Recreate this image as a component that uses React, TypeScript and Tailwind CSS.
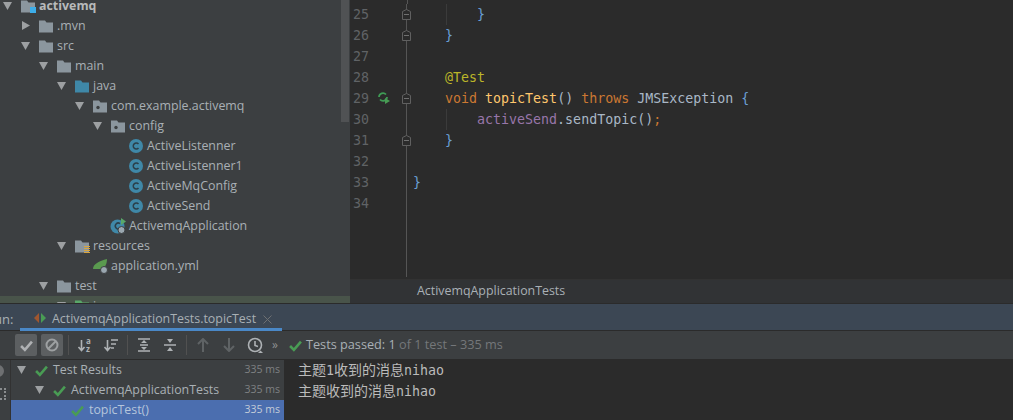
import { ReactNode } from "react";

const uiFont = "font-['Open_Sans','Noto_Sans',sans-serif]";
const monoFont = "font-['DejaVu_Sans_Mono','Noto_Sans_CJK_SC',monospace]";

function Arrow({ open = true }: { open?: boolean }) {
    return (
        <svg width="10" height="10" viewBox="0 0 10 10" className="shrink-0">
            {open ? <path d="M0 1h9L4.500 9z" fill="#9da0a2" /> : <path d="M1 0v9l8-4.500z" fill="#9da0a2" />}
        </svg>
    );
}

function Folder({ color = "#8b969e", dot, badge }: { color?: string; dot?: boolean; badge?: ReactNode }) {
    return (
        <svg width="16" height="14" viewBox="0 0 16 14" className="shrink-0">
            <path d="M0 1.500h6l1.500 2H14v10H0z" fill={color} />
            {dot && <circle cx="5" cy="8.500" r="1.700" fill="#3c3f41" />}
            {badge}
        </svg>
    );
}

function ClassIcon() {
    return (
        <svg width="16" height="16" viewBox="0 0 16 16" className="shrink-0 -ml-px">
            <circle cx="8" cy="8" r="7" fill="#3f88a8" />
            <path d="M10.500 6a3 3 0 1 0 0 4" fill="none" stroke="#2b3f4a" strokeWidth="1.500" />
        </svg>
    );
}

function Row({ depth, arrow, icon, bold, highlight, children }: { depth: number; arrow?: "open" | "closed"; icon: ReactNode; bold?: boolean; highlight?: boolean; children: ReactNode }) {
    return (
        <div className={`flex h-5 shrink-0 items-center ${highlight ? "bg-[#49544a]" : ""}`} style={{ paddingLeft: 3 + depth * 18 }}>
            <div className="flex w-[18px] shrink-0 items-center">{arrow && <Arrow open={arrow === "open"} />}</div>
            <div className="flex w-[18px] shrink-0 items-center">{icon}</div>
            <span className={bold ? "font-bold text-[#b8babb]" : ""}>{children}</span>
        </div>
    );
}

function ProjectTree() {
    return (
        <div className={`relative w-[350px] shrink-0 overflow-hidden bg-[#3c3f41] text-[12.4px] text-[#a9b0b5] ${uiFont}`}>
            <div className="-mt-1 flex flex-col">
                <Row depth={0} arrow="open" bold icon={<Folder badge={<rect x="9" y="8" width="6" height="6" fill="#3daee9" />} />}>activemq</Row>
                <Row depth={1} arrow="closed" icon={<Folder />}>.mvn</Row>
                <Row depth={1} arrow="open" icon={<Folder />}>src</Row>
                <Row depth={2} arrow="open" icon={<Folder />}>main</Row>
                <Row depth={3} arrow="open" icon={<Folder color="#3f88a8" />}>java</Row>
                <Row depth={4} arrow="open" icon={<Folder dot />}>com.example.activemq</Row>
                <Row depth={5} arrow="open" icon={<Folder dot />}>config</Row>
                <Row depth={6} icon={<ClassIcon />}>ActiveListenner</Row>
                <Row depth={6} icon={<ClassIcon />}>ActiveListenner1</Row>
                <Row depth={6} icon={<ClassIcon />}>ActiveMqConfig</Row>
                <Row depth={6} icon={<ClassIcon />}>ActiveSend</Row>
                <Row depth={5} icon={
                    <svg width="16" height="16" viewBox="0 0 16 16" className="-ml-px">
                        <circle cx="7.500" cy="8.500" r="7" fill="#3f88a8" />
                        <path d="M10 5.500a3 3 0 1 0 0 5" fill="none" stroke="#2b3f4a" strokeWidth="1.500" />
                        <path d="M11 0v7l5-3.500z" fill="#59a869" />
                        <circle cx="11.500" cy="12" r="3.500" fill="#9aa7b0" stroke="#3c3f41" />
                    </svg>
                }>ActivemqApplication</Row>
                <Row depth={3} arrow="open" icon={
                    <Folder badge={<path d="M9 7h6v1H9zM9 9h6v1H9zM9 11h6v1H9zM9 13h6v1H9z" fill="#d8a53f" />} />
                }>resources</Row>
                <Row depth={4} icon={
                    <svg width="16" height="16" viewBox="0 0 16 16">
                        <path d="M0 11C0 6 6 3 14 1c0 5-2 9-6 10z" fill="#5a9a4f" />
                        <circle cx="11" cy="12" r="3.500" fill="#9aa7b0" stroke="#3c3f41" />
                    </svg>
                }>application.yml</Row>
                <Row depth={2} arrow="open" icon={<Folder />}>test</Row>
                <Row depth={3} arrow="open" highlight icon={<Folder color="#59a869" />}>java</Row>
            </div>
            <div className="absolute right-[1px] top-0 h-[122px] w-2 bg-[#505254]" />
        </div>
    );
}

function CodeLine({ n, children, marker, fold, guide }: { n?: number; children?: ReactNode; marker?: ReactNode; fold?: boolean; guide?: boolean }) {
    return (
        <div className="flex h-[21px] shrink-0 items-center">
            <div className="w-[19px] shrink-0 text-right text-[#606366]">{n}</div>
            <div className="flex w-[30px] shrink-0 justify-center">{marker}</div>
            <div className="relative flex h-full w-[14px] shrink-0 items-center justify-center">
                <div className="absolute inset-y-0 left-[7px] w-px bg-[#555555]" />
                {fold && (
                    <svg width="9" height="11" viewBox="0 0 9 11" className="relative">
                        <path d="M.5 2.500 4.500.5l4 2v8h-8z" fill="#2b2b2b" stroke="#606060" />
                        <path d="M2 5.500h5" stroke="#707070" />
                    </svg>
                )}
            </div>
            <div className="relative h-full whitespace-pre leading-[21px]">
                {guide && <div className="absolute inset-y-0 left-[33px] w-px bg-[#3b3b3b]" />}
                <span className="relative">{children}</span>
            </div>
        </div>
    );
}

function Editor() {
    return (
        <div className={`flex min-w-0 flex-1 flex-col bg-[#2b2b2b] text-[13.3px] text-[#a9b7c6] ${monoFont}`}>
            <div className="flex min-h-0 flex-1 flex-col overflow-hidden">
                <div className="h-1 shrink-0 pl-[56px]"><div className="ml-[1px] h-full w-px bg-[#555555]" /></div>
                <CodeLine n={25} fold guide><span className="text-[#6a9fd4]">{"        }"}</span></CodeLine>
                <CodeLine n={26} fold><span className="text-[#6a9fd4]">{"    }"}</span></CodeLine>
                <CodeLine n={27} />
                <CodeLine n={28}><span className="text-[#bbb529]">{"    @Test"}</span></CodeLine>
                <CodeLine n={29} fold marker={
                    <svg width="13" height="13" viewBox="0 0 13 13">
                        <path d="M1 5a4 4 0 0 1 7-2.500M9 5a4 4 0 0 1-7 2.500" fill="none" stroke="#3f9b55" strokeWidth="1.800" />
                        <path d="M7 6v6l5-3z" fill="#499c54" />
                    </svg>
                }>
                    <span className="text-[#cc7832]">{"    void "}</span>
                    <span className="text-[#ffc66d]">topicTest</span>
                    <span>() </span>
                    <span className="text-[#cc7832]">throws </span>
                    <span>JMSException </span>
                    <span className="text-[#6a9fd4]">{"{"}</span>
                </CodeLine>
                <CodeLine n={30} guide>
                    <span>{"        "}</span>
                    <span className="text-[#9876aa]">activeSend</span>
                    <span>.sendTopic()</span>
                    <span className="text-[#cc7832]">;</span>
                </CodeLine>
                <CodeLine n={31} fold><span className="text-[#6a9fd4]">{"    }"}</span></CodeLine>
                <CodeLine n={32} />
                <CodeLine n={33}><span className="text-[#6a9fd4]">{"}"}</span></CodeLine>
                <CodeLine n={34} />
                <CodeLine />
                <CodeLine />
                <CodeLine />
            </div>
            <div className={`flex h-6 shrink-0 items-center border-t border-[#323232] bg-[#313335] pl-[67px] text-[12.4px] text-[#a9b0b5] ${uiFont}`}>ActivemqApplicationTests</div>
        </div>
    );
}

function Tool({ children, active }: { children: ReactNode; active?: boolean }) {
    return (
        <div className={`flex h-[22px] w-[22px] shrink-0 items-center justify-center rounded-[2px] ${active ? "bg-[#5c5f61]" : ""}`}>{children}</div>
    );
}

function Separator() {
    return <div className="mx-[1px] h-[20px] w-px shrink-0 bg-[#515151]" />;
}

function Check({ size = 12, color = "#499c54" }: { size?: number; color?: string }) {
    return (
        <svg width={size} height={size} viewBox="0 0 12 12" className="shrink-0">
            <path d="M1 6.500 4.500 10 11 2.500" fill="none" stroke={color} strokeWidth="2.400" />
        </svg>
    );
}

function TestRow({ depth, selected, arrow, children }: { depth: number; selected?: boolean; arrow?: boolean; children: ReactNode }) {
    return (
        <div className={`flex h-5 items-center pr-[4px] ${selected ? "bg-[#4b6eaf]" : ""}`} style={{ paddingLeft: 6 + depth * 18 }}>
            <div className="flex w-[18px] shrink-0 items-center">{arrow && <Arrow />}</div>
            <Check size={13} />
            <span className={`ml-[5px] ${selected ? "text-[#b5c5db]" : ""}`}>{children}</span>
            <span className={`ml-auto text-[10.5px] ${selected ? "text-[#c4ccd8]" : "text-[#7f8183]"}`}>335 ms</span>
        </div>
    );
}

function RunPanel() {
    return (
        <div className={`flex min-h-0 flex-1 flex-col bg-[#3c3f41] text-[12.4px] text-[#a9b0b5] ${uiFont}`}>
            <div className="flex h-7 shrink-0 items-start border-y border-[#2b2b2b] bg-[#3c4754]">
                <span className="ml-[-14px] w-[34px] pt-[6px] text-[13px]">Run:</span>
                <div className="flex h-[27px] w-[262px] items-start border-b-[3px] border-[#4a88c7] pl-[14px] pt-[6px]">
                    <svg width="12" height="12" viewBox="0 0 12 12" className="mt-[2px] shrink-0">
                        <path d="M5 1 0 6l5 5z" fill="#a0562f" />
                        <path d="M7 1l5 5-5 5z" fill="#499c54" />
                    </svg>
                    <span className="ml-[6px] whitespace-nowrap">ActivemqApplicationTests.topicTest</span>
                    <svg width="9" height="9" viewBox="0 0 9 9" className="ml-[7px] mt-[5px] shrink-0" stroke="#6e7072"><path d="M.5.500l8 8M8.500.500l-8 8" /></svg>
                </div>
            </div>
            <div className="flex h-[29px] shrink-0 items-center gap-1 border-b border-[#2b2b2b] pl-[15px]">
                <Tool active><Check size={13} color="#afb1b3" /></Tool>
                <Tool active>
                    <svg width="14" height="14" viewBox="0 0 14 14" fill="none" stroke="#9da0a2" strokeWidth="2"><circle cx="7" cy="7" r="5.500" /><path d="M3 11l8-8" /></svg>
                </Tool>
                <Separator />
                <Tool>
                    <svg width="16" height="16" viewBox="0 0 16 16" fill="none" stroke="#aeb2b5" strokeWidth="1.600">
                        <path d="M4.500 3v10M1.500 10l3 3.500 3-3.500" />
                        <text x="9" y="7" fontSize="8" fill="#aeb2b5" stroke="none" fontWeight="700">a</text>
                        <text x="9" y="14.500" fontSize="8" fill="#aeb2b5" stroke="none" fontWeight="700">z</text>
                    </svg>
                </Tool>
                <Tool>
                    <svg width="16" height="16" viewBox="0 0 16 16" fill="none" stroke="#aeb2b5" strokeWidth="1.600">
                        <path d="M4.500 3v10M1.500 10l3 3.500 3-3.500M8 3h7M8 7h5M8 11h3" />
                    </svg>
                </Tool>
                <Separator />
                <Tool>
                    <svg width="14" height="14" viewBox="0 0 14 14" stroke="#aeb2b5" strokeWidth="1.500" fill="#aeb2b5"><path d="M1 1h12M1 13h12M3 7h8" /><path d="M4 5l3-3 3 3zM4 9l3 3 3-3z" stroke="none" /></svg>
                </Tool>
                <Tool>
                    <svg width="14" height="14" viewBox="0 0 14 14" stroke="#aeb2b5" strokeWidth="1.500" fill="#aeb2b5"><path d="M1 7h12" /><path d="M4 1l3 4 3-4zM4 13l3-4 3 4z" stroke="none" /></svg>
                </Tool>
                <Separator />
                <Tool>
                    <svg width="12" height="14" viewBox="0 0 12 14" fill="none" stroke="#5f6365" strokeWidth="2"><path d="M6 14V2M1 6l5-5 5 5" /></svg>
                </Tool>
                <Tool>
                    <svg width="12" height="14" viewBox="0 0 12 14" fill="none" stroke="#5f6365" strokeWidth="2"><path d="M6 0v12M1 8l5 5 5-5" /></svg>
                </Tool>
                <Tool>
                    <svg width="17" height="17" viewBox="0 0 17 17" fill="none" stroke="#aeb2b5" strokeWidth="1.600"><circle cx="8" cy="8" r="6.500" /><path d="M8 4v4.500l3 1" /><path d="M11 16h5l-2.500-2.500z" fill="#aeb2b5" stroke="none" /></svg>
                </Tool>
                <span className="ml-[2px] w-[13px] text-[12px] text-[#8f9193]">»</span>
                <Check size={13} />
                <span className="text-[12.7px] whitespace-nowrap">Tests passed: 1 <span className="text-[#74777a]">of 1 test – 335 ms</span></span>
            </div>
            <div className="flex min-h-0 flex-1">
                <div className="flex w-[11px] shrink-0 flex-col overflow-hidden border-r border-[#323232]">
                    <div className="-ml-2 mt-[5px] h-3 w-3 rounded-full bg-[#6e7072]" />
                    <div className="-ml-1 mt-[11px] h-3 w-[10px] border-2 border-dotted border-[#8a8d8f]" />
                </div>
                <div className="flex w-[273px] shrink-0 flex-col">
                    <TestRow depth={0} arrow>Test Results</TestRow>
                    <TestRow depth={1} arrow>ActivemqApplicationTests</TestRow>
                    <TestRow depth={2} selected>topicTest()</TestRow>
                </div>
                <div className={`flex-1 bg-[#2b2b2b] pl-[14px] text-[14px] leading-[21px] text-[#bbbbbb] ${monoFont}`}>
                    <div>主题<span className="text-[13.3px]">1</span>收到的消息<span className="text-[13.3px]">nihao</span></div>
                    <div>主题收到的消息<span className="text-[13.3px]">nihao</span></div>
                </div>
            </div>
        </div>
    );
}

export default function App() {
    return (
        <div className="flex h-[420px] w-[1013px] flex-col overflow-hidden">
            <div className="flex h-[303px] shrink-0 overflow-hidden">
                <ProjectTree />
                <Editor />
            </div>
            <RunPanel />
        </div>
    );
}
